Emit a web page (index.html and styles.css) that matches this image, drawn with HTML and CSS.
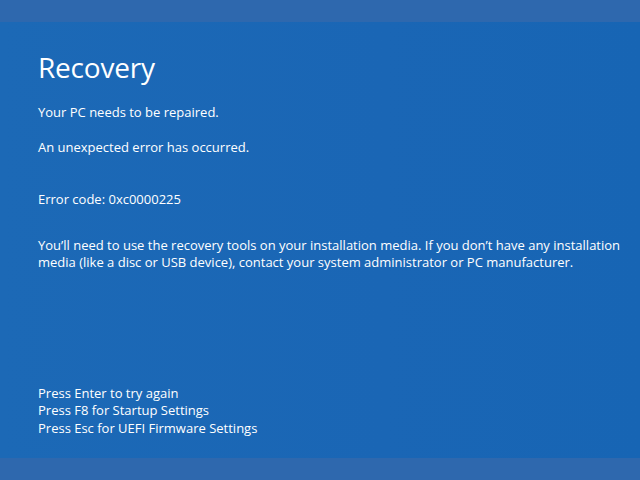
FILE: index.html
```html
<!DOCTYPE html>
<html>
<head>
<meta charset="utf-8">
<link rel="stylesheet" href="styles.css">
</head>
<body>
<div class="band"></div>
<main class="screen">
  <h1 class="title">Recovery</h1>
  <p class="line first">Your PC needs to be repaired.</p>
  <p class="line gap1">An unexpected error has occurred.</p>
  <p class="line gap2">Error code: 0xc0000225</p>
  <p class="line gap3">You’ll need to use the recovery tools on your installation media. If you don’t have any installation media (like a disc or USB device), contact your system administrator or PC manufacturer.</p>
  <div class="keys">
    <p class="line">Press Enter to try again</p>
    <p class="line">Press F8 for Startup Settings</p>
    <p class="line">Press Esc for UEFI Firmware Settings</p>
  </div>
</main>
<div class="band"></div>
</body>
</html>
```

FILE: styles.css
```css
html, body {
  margin: 0;
  padding: 0;
  width: 640px;
  height: 480px;
  overflow: hidden;
  background: #1a66b5;
}
body {
  display: flex;
  flex-direction: column;
  font-family: "Open Sans", "Noto Sans", sans-serif;
  color: #ffffff;
}
.band {
  height: 22px;
  background: #2e68ae;
  flex: none;
}
.screen {
  flex: 1;
  background: linear-gradient(90deg, #1c69b6 0%, #1a66b5 60%, #1765b4 100%);
  padding: 27px 14px 0 38px;
  display: flex;
  flex-direction: column;
}
.title {
  margin: 0;
  font-size: 28px;
  font-weight: 400;
  line-height: 36px;
  letter-spacing: -0.2px;
}
.line {
  margin: 0;
  font-size: 13px;
  line-height: 17.5px;
}
.first { margin-top: 19px; }
.gap1 { margin-top: 17px; }
.gap2 { margin-top: 35px; }
.gap3 { margin-top: 28px; }
.keys {
  margin-top: auto;
  margin-bottom: 21px;
}
```
